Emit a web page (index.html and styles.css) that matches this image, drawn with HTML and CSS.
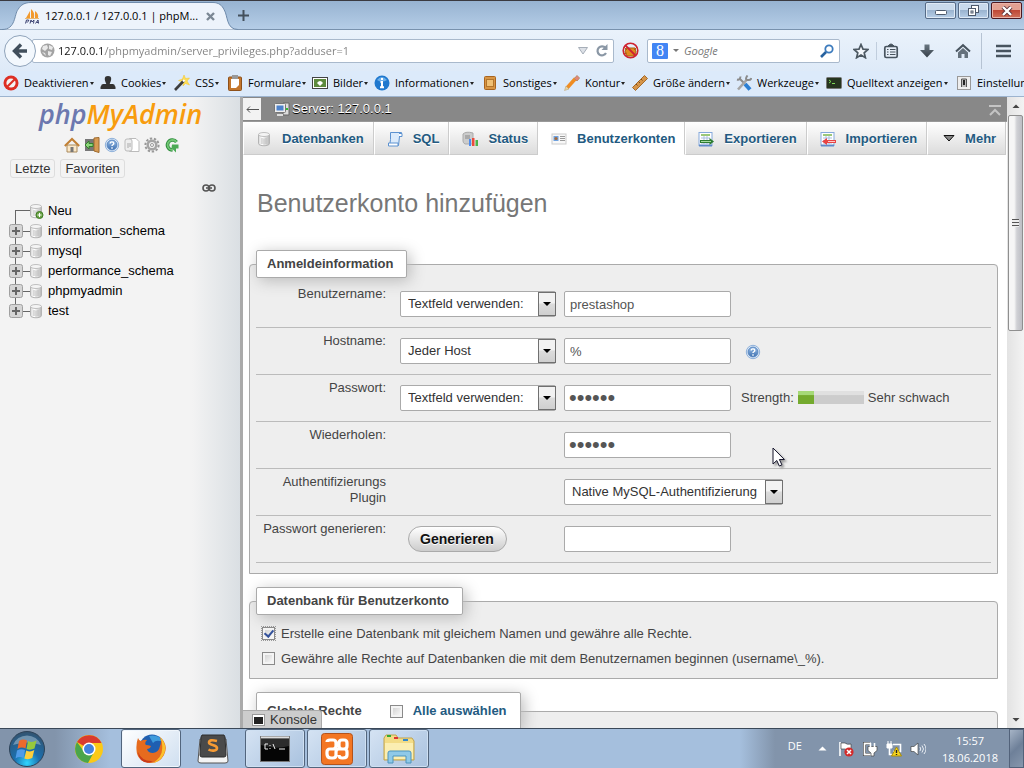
FILE: index.html
```html
<!DOCTYPE html>
<html lang="de">
<head>
<meta charset="utf-8">
<title>127.0.0.1 / 127.0.0.1 | phpMyAdmin</title>
<link rel="stylesheet" href="styles.css">
</head>
<body>
<svg class="sprite" aria-hidden="true">
  <defs>
    <linearGradient id="cyl" x1="0" x2="1"><stop offset="0" stop-color="#d8d8d8"/><stop offset=".35" stop-color="#fff"/><stop offset="1" stop-color="#b5b5b5"/></linearGradient>
    <linearGradient id="blueball" x1="0" x2="0" y1="0" y2="1"><stop offset="0" stop-color="#9cc0e8"/><stop offset="1" stop-color="#3c6fb0"/></linearGradient>
    <linearGradient id="dark" x1="0" x2="0" y1="0" y2="1"><stop offset="0" stop-color="#6a7782"/><stop offset="1" stop-color="#353f48"/></linearGradient>
    <radialGradient id="orb" cx=".5" cy=".9" r=".9"><stop offset="0" stop-color="#2fd6ff"/><stop offset=".4" stop-color="#1b6fae"/><stop offset="1" stop-color="#33536f"/></radialGradient>
  </defs>
  <symbol id="db" viewBox="0 0 16 16"><path d="M2.500 3.500v9c0 3 11 3 11 0v-9z" fill="url(#cyl)" stroke="#b4b4b4"/><ellipse cx="8" cy="3.500" rx="5.500" ry="2" fill="#f4f4f4" stroke="#c0c0c0"/><path d="M6 7v6M8 7.500v6M10 7v6" stroke="#bbb"/></symbol>
  <symbol id="help" viewBox="0 0 16 16"><circle cx="8" cy="8" r="6.700" fill="#d7e5f5" stroke="#8fb1da"/><circle cx="8" cy="8" r="4.900" fill="url(#blueball)" stroke="#5a88c2"/><path d="M6.200 6.500c0-2.200 3.600-2 3.600 0 0 1.300-1.800 1.200-1.800 2.500M8 10.200v1.500" stroke="#fff" stroke-width="1.400" fill="none"/></symbol>
  <symbol id="plus" viewBox="0 0 14 14"><rect x=".5" y=".5" width="13" height="13" rx="2" fill="#d5d5d5" stroke="#a0a0a0"/><path d="M7 3v8M3 7h8" stroke="#666" stroke-width="2"/></symbol>
  <symbol id="sheet" viewBox="0 0 16 16"><rect x="1" y="1.500" width="13" height="13" fill="#fff" stroke="#86a9dc"/><path d="M3 4h9" stroke="#9cc87a" stroke-width="2"/><path d="M3 7h9M3 9.500h9M3 12h9M6 5v8M9 5v8" stroke="#a9bedf"/><path d="M1 14.500h13" stroke="#5f8ac9" stroke-width="2"/></symbol>
</svg>

<header class="titlebar">
  <div class="tab">
    <svg class="tab-shape" viewBox="0 0 236 28" aria-hidden="true"><path d="M0 27.500c14 0 12-15 16-20 3-5 7-7 13-7h182c6 0 9 3 11 7 4 6 2 20 14 20" fill="#edf3fb" stroke="#6f8bab"/></svg>
    <svg class="tab-icon" viewBox="0 0 16 16"><path d="M2 10 6 3v7zM7 10V1q4 3 3 9zM11 10V3q4 3 3 7z" fill="#f29a2e"/><path d="M1 10.500h14" stroke="#e9b872"/><path d="M1.500 15.500 2.500 12h2q1 1-1 2h-1M6 15.500 7 12l1 2 2-2-.5 3.500M11.500 15.500l2.500-3.500.5 3.500m-2-1h2" fill="none" stroke="#3b4171"/></svg>
    <span class="tab-title">127.0.0.1 / 127.0.0.1 | phpM...</span>
    <button class="plain tab-close" aria-label="Tab schließen"><svg width="9" height="9" viewBox="0 0 9 9"><path d="m1 1 7 7M8 1 1 8" stroke="#7b8794" stroke-width="2.400"/></svg></button>
  </div>
  <button class="plain new-tab" aria-label="Neuer Tab"><svg width="11" height="11" viewBox="0 0 11 11"><path d="M5.500 0v11M0 5.500h11" stroke="#44505c" stroke-width="2"/></svg></button>
  <div class="window-buttons">
    <button class="win" aria-label="Minimieren"><svg class="min" width="12" height="6"><rect x=".5" y=".5" width="11" height="4" rx="1" fill="#fff" stroke="#4e5a6c"/></svg></button>
    <button class="win" aria-label="Wiederherstellen"><svg width="13" height="12"><g fill="#fff" stroke="#4e5a6c"><rect x="4.500" y=".5" width="7" height="7"/><rect x="1.500" y="3.500" width="7" height="7"/><rect x="4" y="6" width="2" height="2"/></g></svg></button>
    <button class="win win-close" aria-label="Schließen"><svg width="12" height="10"><path d="m2 1 8 8M10 1 2 9" stroke="#5b3036" stroke-width="4"/><path d="m2 1 8 8M10 1 2 9" stroke="#fff" stroke-width="2.400"/></svg></button>
  </div>
</header>

<nav class="navbar">
  <button class="back" aria-label="Zurück"><svg width="16" height="16" viewBox="0 0 16 16"><path d="M9 1.500 2.500 8 9 14.500M3 8h12" fill="none" stroke="#414f5c" stroke-width="3.400"/></svg></button>
  <div class="urlbox">
    <svg width="15" height="15" viewBox="0 0 15 15"><circle cx="7.500" cy="7.500" r="7" fill="#a3a3a3"/><path d="M3 3 7 2l1 3-3 3-3-2zM9 2l4 2-1 3-3-1zM8 8l4 1-2 4-2-1zM2 9l3 1 1 3z" fill="#e9e9e9"/></svg>
    <input class="url" type="text" aria-label="Adresse" value="127.0.0.1/phpmyadmin/server_privileges.php?adduser=1">
    <svg width="10" height="8"><path d="M.5.500h9L5 7z" fill="#dde1e7" stroke="#a6aeb8"/></svg>
    <button class="plain" aria-label="Neu laden"><svg width="13" height="13" viewBox="0 0 13 13"><path d="M10.500 4A4.500 4.500 0 1 0 11 9" fill="none" stroke="#8a97a5" stroke-width="2.200"/><path d="M12.500 0v6h-6z" fill="#8a97a5"/></svg></button>
  </div>
  <svg class="blocked" width="17" height="17" viewBox="0 0 17 17"><path d="M4 6h9l1 4-2 4H5l-2-4zM2 5l3 3M15 5l-3 3M2 12l3-1" fill="#df8a1e" stroke="#a95f12"/><circle cx="8.500" cy="8.500" r="7.300" fill="none" stroke="#cf2230" stroke-width="1.600"/><path d="m3.500 3.500 10 10" stroke="#cf2230" stroke-width="1.800"/></svg>
  <div class="searchbox">
    <span class="engine">8</span><i class="caret"></i>
    <input class="search" type="text" placeholder="Google" aria-label="Suche">
    <svg width="14" height="14" viewBox="0 0 14 14"><circle cx="9" cy="5" r="3.700" fill="none" stroke="#3c7bbd" stroke-width="1.800"/><path d="m6 8-5 5" stroke="#27629f" stroke-width="2.600"/></svg>
  </div>
  <div class="nav-icons">
    <button class="plain" aria-label="Lesezeichen"><svg width="16" height="16" viewBox="0 0 16 16"><path d="m8 1.500 2 4.600 5 .4-3.800 3.300 1.200 4.900L8 12.100l-4.400 2.600 1.200-4.900L1 6.500l5-.4z" fill="#f3f7fc" stroke="#4c5862" stroke-width="1.700"/></svg></button>
    <i class="thin-line"></i>
    <button class="plain" aria-label="Lesezeichenliste"><svg width="16" height="16" viewBox="0 0 16 16"><rect x="1.800" y="3.500" width="12.400" height="11" rx="1.500" fill="#e6eef8" stroke="#48545f" stroke-width="1.700"/><path d="M5 3q3-4 6 0z" fill="#48545f" stroke="#48545f"/><path d="M4 6.500h1.500M4 9h1.500M4 11.500h1.500M7 6.500h5.500M7 9h5.500M7 11.500h5.500" stroke="#48545f"/></svg></button>
    <button class="plain" aria-label="Downloads"><svg width="16" height="16" viewBox="0 0 16 16"><path d="M5.500 1.500h5V7H15l-7 7.500L1 7h4.500z" fill="url(#dark)"/></svg></button>
    <button class="plain" aria-label="Startseite"><svg width="16" height="16" viewBox="0 0 16 16"><path d="m1 8.500 7-6.300 7 6.300" fill="none" stroke="#48545f" stroke-width="2"/><path d="m3 9.500 5-4.500 5 4.500V15h-3.500v-4h-3v4H3z" fill="#65717c"/></svg></button>
  </div>
  <button class="plain menu" aria-label="Menü"><svg width="17" height="14"><path d="M1 2h15M1 7h15M1 12h15" stroke="#48545f" stroke-width="2.600"/></svg></button>
</nav>

<nav class="devbar">
  <button class="plain"><svg viewBox="0 0 16 16"><circle cx="8" cy="8" r="7.500" fill="#dd2f25"/><circle cx="8" cy="8" r="4.600" fill="#f4f4f4"/><path d="m12 4-8 8" stroke="#dd2f25" stroke-width="2.200"/></svg>Deaktivieren<i class="caret"></i></button>
  <button class="plain"><svg viewBox="0 0 16 16"><path d="M8 1c5 0 3 5 1.700 8H13q2 0 2 2.500h.5V14H.5v-2.500H1Q1 9 3 9h3.300C5 6 3 1 8 1z" fill="#333"/></svg>Cookies<i class="caret"></i></button>
  <button class="plain"><svg viewBox="0 0 16 16"><path d="m10 0 1.500 3.500L15.500 3l-2.500 3 2.500 4-4-1.500L9 11V7L4.500 5.500 8.500 4z" fill="#ffdf55" stroke="#f0c22c" stroke-width=".5"/><path d="m1 15 9-9.500" stroke="#3e3e3e" stroke-width="2.600"/><path d="m9 6.500 1.500-1.500" stroke="#fff" stroke-width="2.400"/></svg>CSS<i class="caret"></i></button>
  <button class="plain"><svg viewBox="0 0 16 16"><rect x="1.500" y="2" width="13" height="13.500" rx="1" fill="#c4762c" stroke="#8d501a"/><path d="M4 4h8v6l-3 3H4z" fill="#fff"/><rect x="5" y="0" width="6" height="4" fill="#999"/></svg>Formulare<i class="caret"></i></button>
  <button class="plain"><svg viewBox="0 0 16 16"><rect x=".5" y="2.500" width="15" height="11" fill="#fff" stroke="#444"/><rect x="2" y="4" width="12" height="8" fill="#5c8a3d"/><path d="M5 8q3-4 6 0l-3 3z" fill="#fff"/></svg>Bilder<i class="caret"></i></button>
  <button class="plain"><svg viewBox="0 0 16 16"><circle cx="8" cy="8" r="7.500" fill="#1f78ce"/><path d="M3 5q5-6 10 0-5 3-10 0" fill="#6db0ea"/><path d="M8 3v2M6.500 7H8v5M6 12.300h4" stroke="#fff" stroke-width="2" fill="none"/></svg>Informationen<i class="caret"></i></button>
  <button class="plain"><svg viewBox="0 0 16 16"><rect x="2.500" y="1.500" width="11" height="13" rx="1" fill="#d79545" stroke="#a8641f"/><rect x="4.500" y="4.500" width="7" height="7" fill="#f0c074" stroke="#b3752c"/></svg>Sonstiges<i class="caret"></i></button>
  <button class="plain"><svg viewBox="0 0 16 16"><path d="m3 13 8.500-9.500" stroke="#ef8d23" stroke-width="3.600"/><path d="m.5 15.500 1.500-4.500 3 3z" fill="#e9d4a5" stroke="#b89c6a" stroke-width=".5"/><path d="m10.500 3.500 2.500-3 2.500 2.500-2.500 3z" fill="#e48678" stroke="#b86"/></svg>Kontur<i class="caret"></i></button>
  <button class="plain"><svg viewBox="0 0 16 16"><path d="M.5 12.500 12.500.5l3 3-12 12z" fill="#d5954a" stroke="#a56c2c"/><path d="m4 9 1.500 1.500M6.500 6.500 8 8M9 4l1.500 1.500" stroke="#7d4d18"/></svg>Größe ändern<i class="caret"></i></button>
  <button class="plain"><svg viewBox="0 0 16 16"><path d="M3 3 9 9M1 4.500q3 1 3.500-3" stroke="#8b8b8b" stroke-width="2" fill="none"/><path d="m9 9 5 5.500" stroke="#2b7fd4" stroke-width="4"/><path d="m2 14.500 9-10" stroke="#a5a5a5" stroke-width="2.600"/><path d="M11.500.5q-3 4 0 4.500 3 .5 4-2" stroke="#8b8b8b" stroke-width="2" fill="none"/></svg>Werkzeuge<i class="caret"></i></button>
  <button class="plain"><svg viewBox="0 0 16 16"><rect x=".5" y="2.500" width="15" height="11" rx="1" fill="#26351f" stroke="#777"/><path d="m3 5 2 1.500L3 8m3 .5h3" stroke="#7ed957" fill="none"/></svg>Quelltext anzeigen<i class="caret"></i></button>
  <button class="plain"><svg viewBox="0 0 16 16"><rect x="1.500" y="1.500" width="13" height="13" fill="#eee" stroke="#999"/><path d="M5.500 12V4h5v8" fill="#bbb" stroke="#555"/><rect x="7" y="5" width="2" height="5" fill="#222"/></svg>Einstellungen</button>
</nav>

<div class="page">
  <aside class="sidebar">
    <a class="logo" href="#"><span>php</span>MyAdmin</a>
    <div class="side-icons">
      <a href="#" aria-label="Startseite"><svg viewBox="0 0 16 16"><path d="M3 8h10v7H3z" fill="#fbe8c8" stroke="#a98a5d"/><path d="m.8 9 7.200-7 7.200 7" fill="none" stroke="#c17f33" stroke-width="2"/><rect x="6.500" y="10" width="3" height="5" fill="#777"/></svg></a>
      <a href="#" aria-label="Abmelden"><svg viewBox="0 0 16 16"><rect x="1" y="2" width="9" height="12" fill="#777"/><path d="M10 1 15 .5v15L10 14z" fill="#d79b55" stroke="#9e6a2e"/><path d="m1 8 4-4v2.500h4v3H5V12z" fill="#8fd67d" stroke="#32822b"/></svg></a>
      <a href="#" aria-label="Hilfe"><svg><use href="#help"/></svg></a>
      <a href="#" aria-label="Dokumentation"><svg viewBox="0 0 16 16"><path d="M5.500 1.500H12l3 3v10H5.500z" fill="#fff" stroke="#bbb"/><rect x="1" y="2" width="7" height="12" rx="2" fill="#eee" stroke="#bbb"/><path d="M4 6v5M6 6v4" stroke="#aaa"/></svg></a>
      <a href="#" aria-label="Einstellungen"><svg viewBox="0 0 16 16"><circle cx="8" cy="8" r="6.600" fill="none" stroke="#999" stroke-width="2" stroke-dasharray="2.400 1.700"/><circle cx="8" cy="8" r="4.300" fill="#eee" stroke="#a5a5a5" stroke-width="2.400"/><circle cx="8" cy="8" r="1.500" fill="#fff" stroke="#999"/></svg></a>
      <a href="#" aria-label="Neu laden"><svg viewBox="0 0 16 16"><path d="M12.500 5a5 5 0 1 0-4 8" fill="none" stroke="#2f8e3e" stroke-width="3.600"/><path d="M12.500 5a5 5 0 1 0-4 8" fill="none" stroke="#72c674" stroke-width="1.800"/><path d="M8 7.500h6.500v4H12v4L7.500 11z" fill="#4caa55"/></svg></a>
    </div>
    <div class="side-buttons"><button>Letzte</button><button>Favoriten</button></div>
    <svg class="chain" width="14" height="8" viewBox="0 0 14 8"><g fill="none" stroke="#555" stroke-width="1.600"><rect x="1" y="1" width="6" height="6" rx="3"/><rect x="7" y="1" width="6" height="6" rx="3"/><path d="M4 4h6"/></g></svg>
    <ul class="tree">
      <li class="new"><i class="branch"></i><svg viewBox="0 0 16 16"><use href="#db"/><circle cx="11.500" cy="12" r="3.500" fill="#6ba546" stroke="#3f7a24"/><path d="M11.500 10v4M9.500 12h4" stroke="#fff"/></svg><a href="#">Neu</a></li>
      <li><button class="plain" aria-label="Aufklappen"><svg class="expander"><use href="#plus"/></svg></button><i class="branch"></i><svg><use href="#db"/></svg><a href="#">information_schema</a></li>
      <li><button class="plain" aria-label="Aufklappen"><svg class="expander"><use href="#plus"/></svg></button><i class="branch"></i><svg><use href="#db"/></svg><a href="#">mysql</a></li>
      <li><button class="plain" aria-label="Aufklappen"><svg class="expander"><use href="#plus"/></svg></button><i class="branch"></i><svg><use href="#db"/></svg><a href="#">performance_schema</a></li>
      <li><button class="plain" aria-label="Aufklappen"><svg class="expander"><use href="#plus"/></svg></button><i class="branch"></i><svg><use href="#db"/></svg><a href="#">phpmyadmin</a></li>
      <li><button class="plain" aria-label="Aufklappen"><svg class="expander"><use href="#plus"/></svg></button><i class="branch"></i><svg><use href="#db"/></svg><a href="#">test</a></li>
    </ul>
  </aside>

  <main class="main">
    <div class="serverbar">
      <button class="collapse" aria-label="Navigation einklappen"><svg width="13" height="7"><path d="M1 3.500h12M4 .5l-3 3 3 3" fill="none" stroke="#555"/></svg></button>
      <svg width="16" height="16" viewBox="0 0 16 16"><path d="M9 2h6v12H9z" fill="#ddd" stroke="#666"/><path d="M13 7v2" stroke="#3b3" stroke-width="2"/><rect x=".5" y="2.500" width="11" height="9" rx="1" fill="#eee" stroke="#777"/><rect x="2.500" y="4.500" width="7" height="5" fill="#4d82cc"/><path d="M3 14h6" stroke="#ddd" stroke-width="2"/></svg>
      <a href="#">Server: 127.0.0.1</a>
      <svg class="to-top" width="12" height="11"><path d="M0 1h12M1 10l5-5 5 5" fill="none" stroke="#c4c4c4" stroke-width="2"/></svg>
    </div>
    <nav class="tabs">
      <a href="#"><svg><use href="#db"/></svg>Datenbanken</a>
      <a href="#"><svg viewBox="0 0 16 16"><path d="M3.500 1.500h11q-2 1-2 4l-1 9H1.500q2-2 2-6z" fill="#dcebfb" stroke="#5d92d0"/><path d="M12 2.500h3v3h-3M1.500 12h9.500v3H1.500z" fill="#fff" stroke="#5d92d0"/></svg>SQL</a>
      <a href="#"><svg viewBox="0 0 16 16"><path d="M1 3q3-3 10-1v11H3q-2-1-2-3z" fill="#ccc" stroke="#aaa"/><path d="M3 5h5M3 7h5" stroke="#888"/><path d="M7 8h2v7H7z" fill="#4c8cf0"/><path d="M10 7h2.500v8H10z" fill="#ec4b3c"/><path d="M13.500 9H16v6h-2.500z" fill="#4cb44b"/></svg>Status</a>
      <a href="#" class="active"><svg viewBox="0 0 16 16"><rect x="1" y="3" width="14" height="10" fill="#f8f8f8" stroke="#ccc"/><rect x="2.500" y="5" width="5" height="5" fill="#6fa1de"/><circle cx="5" cy="7.500" r="1.600" fill="#a46a3a"/><path d="M9 5.500h5M9 7.500h5M9 9.500h5" stroke="#999"/></svg>Benutzerkonten</a>
      <a href="#"><svg viewBox="0 0 16 16"><use href="#sheet"/><path d="M2 10.500h11" stroke="#2e7d32" stroke-width="3"/><path d="m11.500 7 4.500 3.500-4.500 3.500z" fill="#2e7d32"/><path d="M3 10.500h10" stroke="#a6dba0"/></svg>Exportieren</a>
      <a href="#"><svg viewBox="0 0 16 16"><use href="#sheet"/><path d="M6 10.500h10" stroke="#e84444" stroke-width="3"/><path d="M7 7v7l-5-3.500z" fill="#e84444"/><path d="M8 10.500h7" stroke="#ffc9c9"/></svg>Importieren</a>
      <a href="#" class="more"><svg class="down" viewBox="0 0 12 7"><path d="M1 .5h10l-5 5.500z" fill="#888" stroke="#111"/></svg>Mehr</a>
      <i class="rest"></i>
    </nav>

    <form class="content">
      <h1>Benutzerkonto hinzufügen</h1>
      <fieldset class="login">
        <legend>Anmeldeinformation</legend>
        <div class="row">
          <label for="user">Benutzername:</label>
          <span class="pick"><select aria-label="Benutzername Art"><option>Textfeld verwenden:</option></select><i></i></span>
          <input class="field" id="user" type="text" value="prestashop">
        </div>
        <div class="row">
          <label for="host">Hostname:</label>
          <span class="pick"><select aria-label="Hostname Art"><option>Jeder Host</option></select><i></i></span>
          <input class="field" id="host" type="text" value="%">
          <a class="hint" href="#" aria-label="Hilfe"><svg><use href="#help"/></svg></a>
        </div>
        <div class="row">
          <label for="pw">Passwort:</label>
          <span class="pick"><select aria-label="Passwort Art"><option>Textfeld verwenden:</option></select><i></i></span>
          <input class="field" id="pw" type="password" value="secret">
          <div class="strength">Strength: <meter min="0" max="4" value="1"></meter> Sehr schwach</div>
        </div>
        <div class="row">
          <label for="pw2">Wiederholen:</label>
          <input class="field third" id="pw2" type="password" value="secret">
        </div>
        <div class="row">
          <label for="plugin">Authentifizierungs Plugin</label>
          <span class="pick third wide"><select id="plugin"><option>Native MySQL-Authentifizierung</option></select><i></i></span>
        </div>
        <div class="row">
          <label for="gen">Passwort generieren:</label>
          <button type="button" class="generate">Generieren</button>
          <input class="field" id="gen" type="text">
        </div>
      </fieldset>
      <fieldset class="database">
        <legend>Datenbank für Benutzerkonto</legend>
        <label class="check"><input class="focused" type="checkbox" checked>Erstelle eine Datenbank mit gleichem Namen und gewähre alle Rechte.</label>
        <label class="check"><input type="checkbox">Gewähre alle Rechte auf Datenbanken die mit dem Benutzernamen beginnen (username\_%).</label>
      </fieldset>
      <fieldset class="global">
        <legend>Globale Rechte <label class="check all"><input type="checkbox">Alle auswählen</label></legend>
      </fieldset>
    </form>
    <button class="console"><svg width="13" height="12"><rect x=".5" y=".5" width="12" height="11" fill="#fff" stroke="#999"/><path d="M2 3h9v7H2z" fill="#222"/></svg>Konsole</button>
  </main>

  <div class="scrollbar" aria-hidden="true">
    <svg width="17" height="17"><path d="M5.500 11h7L9 7.500z" fill="#444"/></svg>
    <div class="thumb"><i></i></div>
    <svg width="17" height="17"><path d="M5.500 7h7L9 10.500z" fill="#444"/></svg>
  </div>
  <svg class="pointer" width="14" height="21" viewBox="0 0 14 21"><path d="M1 1v16l3.800-3.500L7.300 19l2.600-1.200-2.500-5.300h5z" fill="#fff" stroke="#14142b"/></svg>
</div>

<footer class="taskbar">
  <button class="plain start" aria-label="Start"><svg width="38" height="38" viewBox="0 0 38 38"><circle cx="19" cy="19" r="17.500" fill="url(#orb)" stroke="#2d4257"/><path d="M5 15a15 15 0 0 1 28 0q-14-5-28 0" fill="#9db7cc" opacity=".6"/><path d="M11 11q4-2.500 8-.5l-1.500 8q-4-2-8 .5z" fill="#ec6a2c"/><path d="M20 11q4 2 8.500-.5l-2 8q-4 2-8 .500z" fill="#98c93c"/><path d="M9 20.500q4-2.300 8-.5l-1.500 8q-4-2-8 .5z" fill="#4f9be8"/><path d="M18.300 20.500q4 2 8-.5l-2 8q-4 2-8 .5z" fill="#fdcf3b"/></svg></button>
  <button class="task" aria-label="Chrome"><svg width="30" height="30" viewBox="0 0 30 30"><circle cx="15" cy="15" r="14" fill="#fbc916"/><path d="M15 15 3 8a14 14 0 0 1 24.500 1H15z" fill="#da3b2f"/><path d="M3 8a14 14 0 0 0 11 21l6-11-10-.5z" fill="#4aa54b"/><circle cx="15" cy="15" r="6.500" fill="#fff"/><circle cx="15" cy="15" r="5" fill="#4482dd"/></svg></button>
  <button class="task open current" aria-label="Firefox"><svg width="32" height="32" viewBox="0 0 32 32"><circle cx="17" cy="14" r="12.500" fill="#1f5fb1"/><path d="M14 3q10-2 14 6-7-3-10 1z" fill="#3d9bdc"/><path d="M3 5q1 3 3 3 3-2 6-1-3 3-1 5 2 0 5 1-1 3-4 3 1 4 6 4 6-1 7-7 2-5 0-9 9 8 4 18-5 9-15 8Q2 28 1.500 17 1 10 3 5z" fill="#e66b1e"/><path d="M25 4q8 8 4 17-4 8-11 9 9-6 9-13 1-7-2-13z" fill="#fbc12b"/><path d="M3 19q4 10 15 9-6 4-12-1-3-4-3-8z" fill="#c93a1b"/></svg></button>
  <button class="task" aria-label="Sublime Text"><svg width="32" height="30" viewBox="0 0 32 30"><path d="M3 5h26l2 22q0 2-3 2H4q-3 0-3-2z" fill="#f4f4f4" stroke="#555"/><path d="m4 3 1-2h22l1 2 1 18q0 2-2 2H5q-2 0-2-2z" fill="#4a4a4a" stroke="#2d2d2d"/><path d="M20 7q-8-2-8 1.500c0 3 8 2 8 5.500 0 3.500-6 3-8.500 1.500" fill="none" stroke="#f59a34" stroke-width="2.600"/></svg></button>
  <button class="task open" aria-label="Eingabeaufforderung"><svg width="30" height="26" viewBox="0 0 30 26"><rect x=".5" y=".5" width="29" height="25" fill="#050505" stroke="#777"/><path d="M1 1.500h28" stroke="#ddd" stroke-width="2"/><path d="M1 9q14 5 28 1V3H1z" fill="#2c2c2c"/><path d="M8 8H5v5h3M10 9v1M10 12v1M13 8l2 5M19 13h6" fill="none" stroke="#eee"/></svg></button>
  <button class="task open" aria-label="XAMPP"><svg width="32" height="32" viewBox="0 0 32 32"><rect x=".5" y=".5" width="31" height="31" rx="3" fill="#f37623" stroke="#b3531c"/><path d="M6 9q0-2 3-2h3q3 0 3 3v3q0 3-3 3h-2M10 16H9q-3 0-3 3v2q0 4 4 4h2q3 0 3-3v-3q0-3 3-3h5q3 0 3 3v3q0 3-4 3h-1q-3 0-3-3M26 10q0-3-3-3h-2q-3 0-3 3v3q0 3 3 3h2q3 0 3-3z" fill="none" stroke="#fff" stroke-width="3.200" stroke-linejoin="round"/></svg></button>
  <button class="task open" aria-label="Explorer"><svg width="32" height="30" viewBox="0 0 32 30"><path d="M1 4 3 1h10l2 3h14l2 3v19H1z" fill="#f3dc86" stroke="#bfa24d"/><path d="M4 2h4" stroke="#3a3" stroke-width="2"/><path d="M11 4h4" stroke="#d33" stroke-width="2"/><path d="M20 6h5" stroke="#38c" stroke-width="2"/><path d="M2 9h28v16H2z" fill="#fbeeb2"/><path d="M5 29V19q0-2 2-2h19q2 0 2 2v10h-5v-7H10v7z" fill="#8fc9e8" stroke="#4c94bd"/></svg></button>
  <div class="tray">
    <span class="lang">DE</span>
    <svg width="9" height="5"><path d="M.5 4.500h8l-4-4z" fill="#fff"/></svg>
    <svg width="16" height="16" viewBox="0 0 16 16"><path d="M2 1v14" stroke="#fff" stroke-width="1.600"/><path d="M3 2h4q2 2 6 1v6q-4 1-6-1H3z" fill="#fff" stroke="#333" stroke-width=".6"/><circle cx="11" cy="11" r="4.600" fill="#d32b2b"/><path d="m9 9 4 4M13 9l-4 4" stroke="#fff" stroke-width="1.500"/></svg>
    <svg width="16" height="16" viewBox="0 0 16 16"><path d="M8 2.500H2.500v11H8" stroke="#333" stroke-width="3" fill="none"/><path d="M9 2.500H2.500v11H9" stroke="#fff" stroke-width="1.800" fill="none"/><path d="M6 5.500h9v4l-3 2.500v3H9v-3L6 9.500z" fill="#fff" stroke="#444" stroke-width=".7"/><path d="M8.500 2v4M12.500 2v4" stroke="#fff" stroke-width="1.600"/></svg>
    <svg width="16" height="16" viewBox="0 0 16 16"><path d="M7 3.500h7.500v7H7M3.500 7v6.500H9" fill="none" stroke="#fff" stroke-width="1.600"/><path d="M1 3h5v4H1zM2 0v3M5 0v3" fill="#fff" stroke="#fff"/><path d="m10.500 6 5 9h-10z" fill="#f7d51d" stroke="#a98c0b"/><path d="M10.500 9v3M10.500 13v1" stroke="#222" stroke-width="1.400"/></svg>
    <svg width="16" height="16" viewBox="0 0 16 16"><path d="M1 5.500h3L8 2v12l-4-3.500H1z" fill="#fff" stroke="#333" stroke-width=".6"/><path d="M10 6q1.500 2 0 4M12 4.500q3 3.500 0 7M14 3q4 5 0 10" fill="none" stroke="#e8edf3"/></svg>
    <time class="clock">15:57<br>18.06.2018</time>
  </div>
  <button class="desktop" aria-label="Desktop anzeigen"></button>
</footer>
</body>
</html>
```

FILE: styles.css
```css
* { box-sizing: border-box; }
html, body { height: 100%; }
body {
  margin: 0;
  display: flex;
  flex-direction: column;
  overflow: hidden;
  background: #fff;
  color: #444;
  font: 13px/16px "Liberation Sans", Arial, sans-serif;
}
.sprite { position: absolute; width: 0; height: 0; }
svg { flex: none; display: block; }
a { color: inherit; text-decoration: none; }
.plain { border: 0; padding: 0; background: none; color: inherit; font: inherit; display: flex; align-items: center; }
.caret { flex: none; width: 0; height: 0; border: 3px solid transparent; border-top-color: #222; border-bottom: 0; }

/* window frame */
.titlebar, .navbar, .devbar, .taskbar { flex: none; font-family: "Open Sans", "Noto Sans", sans-serif; font-size: 12px; color: #000; }
.titlebar {
  height: 30px;
  display: flex;
  align-items: flex-start;
  padding-left: 2px;
  border-top: 1px solid #3a3a40;
  border-bottom: 1px solid #7891ad;
  background: linear-gradient(#97b3d1, #b5cde7);
}
.tab { position: relative; width: 228px; height: 29px; padding: 1px 15px 0 22px; display: flex; align-items: center; gap: 5px; }
.tab-shape { position: absolute; left: 0; top: 1px; width: 236px; height: 28px; }
.tab-icon { position: relative; width: 16px; height: 16px; }
.tab-title { position: relative; flex: 1; white-space: nowrap; font-size: 11px; }
.tab-close { position: relative; }
.new-tab { margin: 9px 0 0 8px; }
.window-buttons { margin-left: auto; display: flex; gap: 2px; padding: 1px 2px 0 0; }
.win {
  width: 31px; height: 17px; padding: 0;
  display: flex; align-items: center; justify-content: center;
  border: 1px solid #566b87; border-radius: 2px;
  background: linear-gradient(#c9daec 45%, #9bb4d0 50%, #b8cfe8);
  box-shadow: inset 0 0 0 1px #dfeaf6;
}
.win .min { margin-top: 4px; }
.win-close { border-color: #4c1820; background: linear-gradient(#e2a192 45%, #bf4836 50%, #d0705a); box-shadow: inset 0 0 0 1px #e9b3a8; }

.navbar { height: 41px; display: flex; align-items: center; padding: 0 12px 0 4px; background: linear-gradient(#eaf2fb, #deeaf8); }
.back {
  position: relative; z-index: 1;
  width: 32px; height: 32px; padding: 0;
  display: flex; align-items: center; justify-content: center;
  border: 1px solid #8fa3ba; border-radius: 50%; background: #f3f8fd;
}
.urlbox, .searchbox { height: 24px; display: flex; align-items: center; border: 1px solid #a9b9cc; border-radius: 2px; background: #fff; }
.urlbox { flex: 1; margin-left: -4px; padding: 0 5px 0 7px; gap: 7px; }
.url, .search { min-width: 0; flex: 1; border: 0; padding: 0; background: none; font: inherit; outline: 0; }
.url { margin-left: -4px; background: linear-gradient(90deg, #111 47px, #808080 47px); -webkit-background-clip: text; background-clip: text; color: transparent; font-size: 11px; }
.blocked { margin: 0 8px; }
.searchbox { width: 193px; padding: 0 5px 0 4px; gap: 5px; }
.searchbox .caret { border-top-color: #777; }
.engine { width: 16px; height: 16px; background: #4285f4; color: #fff; border-radius: 1px; text-align: center; font: 16px/16px "Liberation Serif", serif; }
.search::placeholder { color: #777; font-style: italic; opacity: 1; font-size: 11px; }
.nav-icons { display: flex; align-items: center; gap: 20px; margin-left: 13px; }
.thin-line { width: 1px; height: 18px; margin: 0 -14px 0 -13px; background: #c0cddd; }
.menu { margin-left: 10px; padding-left: 13px; height: 36px; border-left: 1px solid #b6c3d3; }

.devbar {
  height: 26px;
  display: grid;
  grid-template-columns: 97px 74px 53px 85px 62px 108px 82px 68px 104px 90px 130px 100px;
  padding: 0 0 1px 3px;
  border-bottom: 1px solid #9db4cf;
  background: #dceafa;
  overflow: hidden;
}
.devbar .plain { gap: 1px; white-space: nowrap; font-size: 11px; }
.devbar .caret { border-width: 3px 2px 0; }
.devbar svg { width: 16px; height: 16px; margin-right: 4px; }

/* page */
.page { position: relative; flex: 1; min-height: 0; display: flex; }
.sidebar {
  flex: none; width: 243px; padding-top: 1px;
  display: flex; flex-direction: column;
  border-right: 3px solid #aaa;
  background: linear-gradient(90deg, #f3f3f3 80%, #dadfe3);
}
.logo { margin-left: 39px; color: #f89c0e; font: italic 600 27px/32px "Open Sans", sans-serif; }
.logo span { color: #6c78af; }
.side-icons { display: flex; gap: 4px; margin: 7px 0 0 64px; }
.side-icons svg, .tree svg, .tabs svg { width: 16px; height: 16px; }
.side-buttons { display: flex; gap: 5px; margin: 6px 0 0 10px; }
.side-buttons button { height: 19px; padding: 0 4px; border: 1px solid #ddd; border-radius: 3px; background: #f3f3f3; color: #333; font: 13px/17px "Liberation Sans", sans-serif; }
.chain { margin: 6px 0 0 202px; }
.tree { list-style: none; margin: 8px 0 0; padding: 0 0 0 9px; color: #000; }
.tree li { position: relative; height: 20px; display: flex; align-items: center; }
.tree .new { height: 21px; padding-left: 6px; }
.tree svg + a { margin-left: 4px; }
.tree .expander { position: relative; z-index: 1; width: 14px; height: 14px; }
.branch { width: 7px; height: 1px; margin-right: -2px; background: #666; }
.new .branch { width: 15px; }
.tree li::before { content: ""; position: absolute; left: 6px; top: 0; bottom: 0; width: 1px; background: #666; }
.tree .new::before { top: 10px; }
.tree li:last-child::before { bottom: 10px; }

.main { position: relative; flex: 1; min-width: 0; overflow: hidden; background: #fff; }
.serverbar { height: 25px; display: flex; align-items: center; background: #888; color: #fff; border-bottom: 1px solid #999; text-shadow: 0 1px 0 #000; }
.serverbar a { margin-left: 2px; }
.collapse { width: 18px; height: 22px; margin-right: 13px; padding: 0; border: 0; display: flex; align-items: center; justify-content: center; background: #f3f3f3; }
.to-top { margin: 3px 6px 0 auto; }
.tabs { display: flex; height: 33px; color: #235a81; font-weight: bold; text-shadow: 0 1px 0 #fff; }
.tabs a {
  display: flex; align-items: center; gap: 10px; padding: 1px 9px 0 12px;
  border-right: 1px solid #ccc; border-bottom: 1px solid #ccc; border-left: 1px solid #fff;
  background: linear-gradient(#fff, #dcdcdc);
}
.tabs .active { background: #fff; border-bottom-color: #fff; }
.tabs .more { padding-left: 15px; }
.tabs .down { width: 12px; height: 7px; }
.rest { flex: 1; background: linear-gradient(#fff, #dcdcdc); border-left: 1px solid #fff; max-width: 3px; }

.content { padding: 0 9px 0 6px; }
h1 { margin: 33px 0 32px 8px; font-size: 25px; line-height: 30px; font-weight: normal; color: #777; }
fieldset { min-width: 0; margin: 0 0 13px; padding: 3px 6px 10px; border: 1px solid #aaa; border-radius: 4px 4px 0 0; background: #eee; }
legend {
  height: 28px; padding: 0 13px 0 10px; display: flex; align-items: center;
  border: 1px solid #aaa; border-radius: 2px; background: #fff;
  font-weight: bold; box-shadow: 3px 3px 15px #bbb;
}
.row {
  display: grid;
  grid-template-columns: 136px 156px 167px 1fr;
  column-gap: 8px;
  padding: 10px 0;
  border-bottom: 1px solid #bbb;
}
.row > label { margin: -5px 6px 0 0; height: 31px; text-align: right; }
.row > label[for="plugin"] { padding-left: 24px; }
.field { height: 26px; width: 100%; padding: 0 5px; border: 1px solid #aaa; border-radius: 2px; background: #fff; color: #555; font: inherit; }
.field[type="password"] { padding: 0 4px; font-size: 22px; }
.third { grid-column: 3; }
.pick { position: relative; display: block; height: 26px; }
.wide { grid-column: 3 / 5; width: 219px; }
.pick select { width: 100%; height: 26px; padding: 0 20px 0 7px; appearance: none; border: 1px solid #aaa; border-radius: 2px; background: #fff; color: #333; font: inherit; }
.pick i { position: absolute; right: 0; top: 1px; width: 18px; height: 24px; border: 1px solid #707070; background: linear-gradient(#f2f2f2 45%, #dcdcdc 50%, #cfcfcf); pointer-events: none; }
.pick i::after { content: ""; position: absolute; left: 4px; top: 9px; border: 4px solid transparent; border-top-color: #000; border-bottom: 0; }
.hint { display: flex; align-items: center; padding: 2px 0 0 6px; }
.hint svg { width: 16px; height: 16px; }
.strength { display: flex; align-items: center; gap: 4px; padding-left: 2px; }
meter { appearance: none; width: 66px; height: 13px; margin-top: 11px; }
meter::-webkit-meter-inner-element { display: block; height: 13px; }
meter::-webkit-meter-bar { height: 13px; border: 0; border-radius: 0; background: linear-gradient(#e0e0e0 30%, #ccc 35%); }
meter::-webkit-meter-optimum-value { background: linear-gradient(#a6d978 30%, #74aa2e 35%); }
.generate {
  justify-self: start; margin-left: 8px; height: 26px; padding: 0 12px 0 11px;
  border: 1px solid #aaa; border-radius: 13px; background: linear-gradient(#fff, #ccc);
  color: #111; font: bold 14px/24px "Liberation Sans", sans-serif; text-shadow: 0 1px 0 #fff;
}
.database { padding: 6px 12px 7px; }
.database legend, .global legend { margin-left: -6px; }
.check { display: flex; align-items: center; height: 25px; gap: 6px; }
.check input {
  appearance: none; flex: none; position: relative; width: 13px; height: 13px; margin: 0;
  border: 1px solid #8a8a8a; background: linear-gradient(135deg, #ccc, #fff); box-shadow: inset 0 0 0 2px #f4f4f4;
}
.check input:checked::after { content: ""; position: absolute; left: 3px; top: 0; width: 4px; height: 7px; border: solid #34529b; border-width: 0 2px 2px 0; transform: rotate(40deg); }
.check .focused { outline: 1px dotted #999; }
.global { padding: 2px 12px 60px; }
.global legend { height: 38px; gap: 28px; }
.all { gap: 10px; color: #235a81; }
.console {
  position: absolute; left: 0; bottom: 0; height: 18px; padding: 0 4px 0 9px;
  display: flex; align-items: center; gap: 5px;
  border: 0; border-top: 1px solid #aaa; border-right: 1px solid #aaa; border-radius: 0 3px 0 0;
  background: #ccc; color: #333; font: 13px/16px "Liberation Sans", sans-serif;
}

.scrollbar { flex: none; width: 17px; display: flex; flex-direction: column; background: linear-gradient(90deg, #e3e3e3, #f3f3f3); }
.thumb {
  height: 216px; margin: 1px 1px auto; display: flex; align-items: center; justify-content: center;
  border: 1px solid #8f8f8f; border-radius: 2px; background: linear-gradient(90deg, #f6f6f6 40%, #d0d1d5 60%, #bdbec4);
}
.thumb i { width: 7px; height: 8px; background: repeating-linear-gradient(#555 0 1px, #eee 1px 3px); }
.pointer { position: absolute; left: 772px; top: 350px; filter: drop-shadow(2px 2px 1px #999); }

/* taskbar */
.taskbar {
  height: 40px; display: flex; align-items: stretch; padding-left: 8px;
  border-top: 1px solid #3a4858;
  background: linear-gradient(90deg, #8294ab 55px, #a5bfdd 110px, #a5bfdd 740px, #8294ab 775px);
}
.start { width: 51px; }
.task { width: 60px; margin-right: 2px; padding: 0; display: flex; align-items: center; justify-content: center; border: 1px solid transparent; background: none; }
.open { border-color: #52657d; border-radius: 3px; background: linear-gradient(135deg, #d5e3f3, #a9c2df); box-shadow: inset 0 0 0 1px #cfe0f2; }
.current { background: linear-gradient(135deg, #fff, #cfdff0); box-shadow: inset 0 0 0 1px #f0f6fc; }
.tray { margin-left: auto; display: flex; align-items: center; gap: 8px; color: #fff; }
.lang { padding: 0 8px 6px 0; font-size: 11px; }
.tray > svg:nth-of-type(1) { margin-right: 3px; }
.clock { margin-left: 8px; text-align: center; font-size: 11px; line-height: 17px; }
.desktop { width: 15px; margin-left: 11px; padding: 0; border: 1px solid #52627a; background: linear-gradient(135deg, #a6b4c6, #6e8099 50%, #8797ad); }
```
